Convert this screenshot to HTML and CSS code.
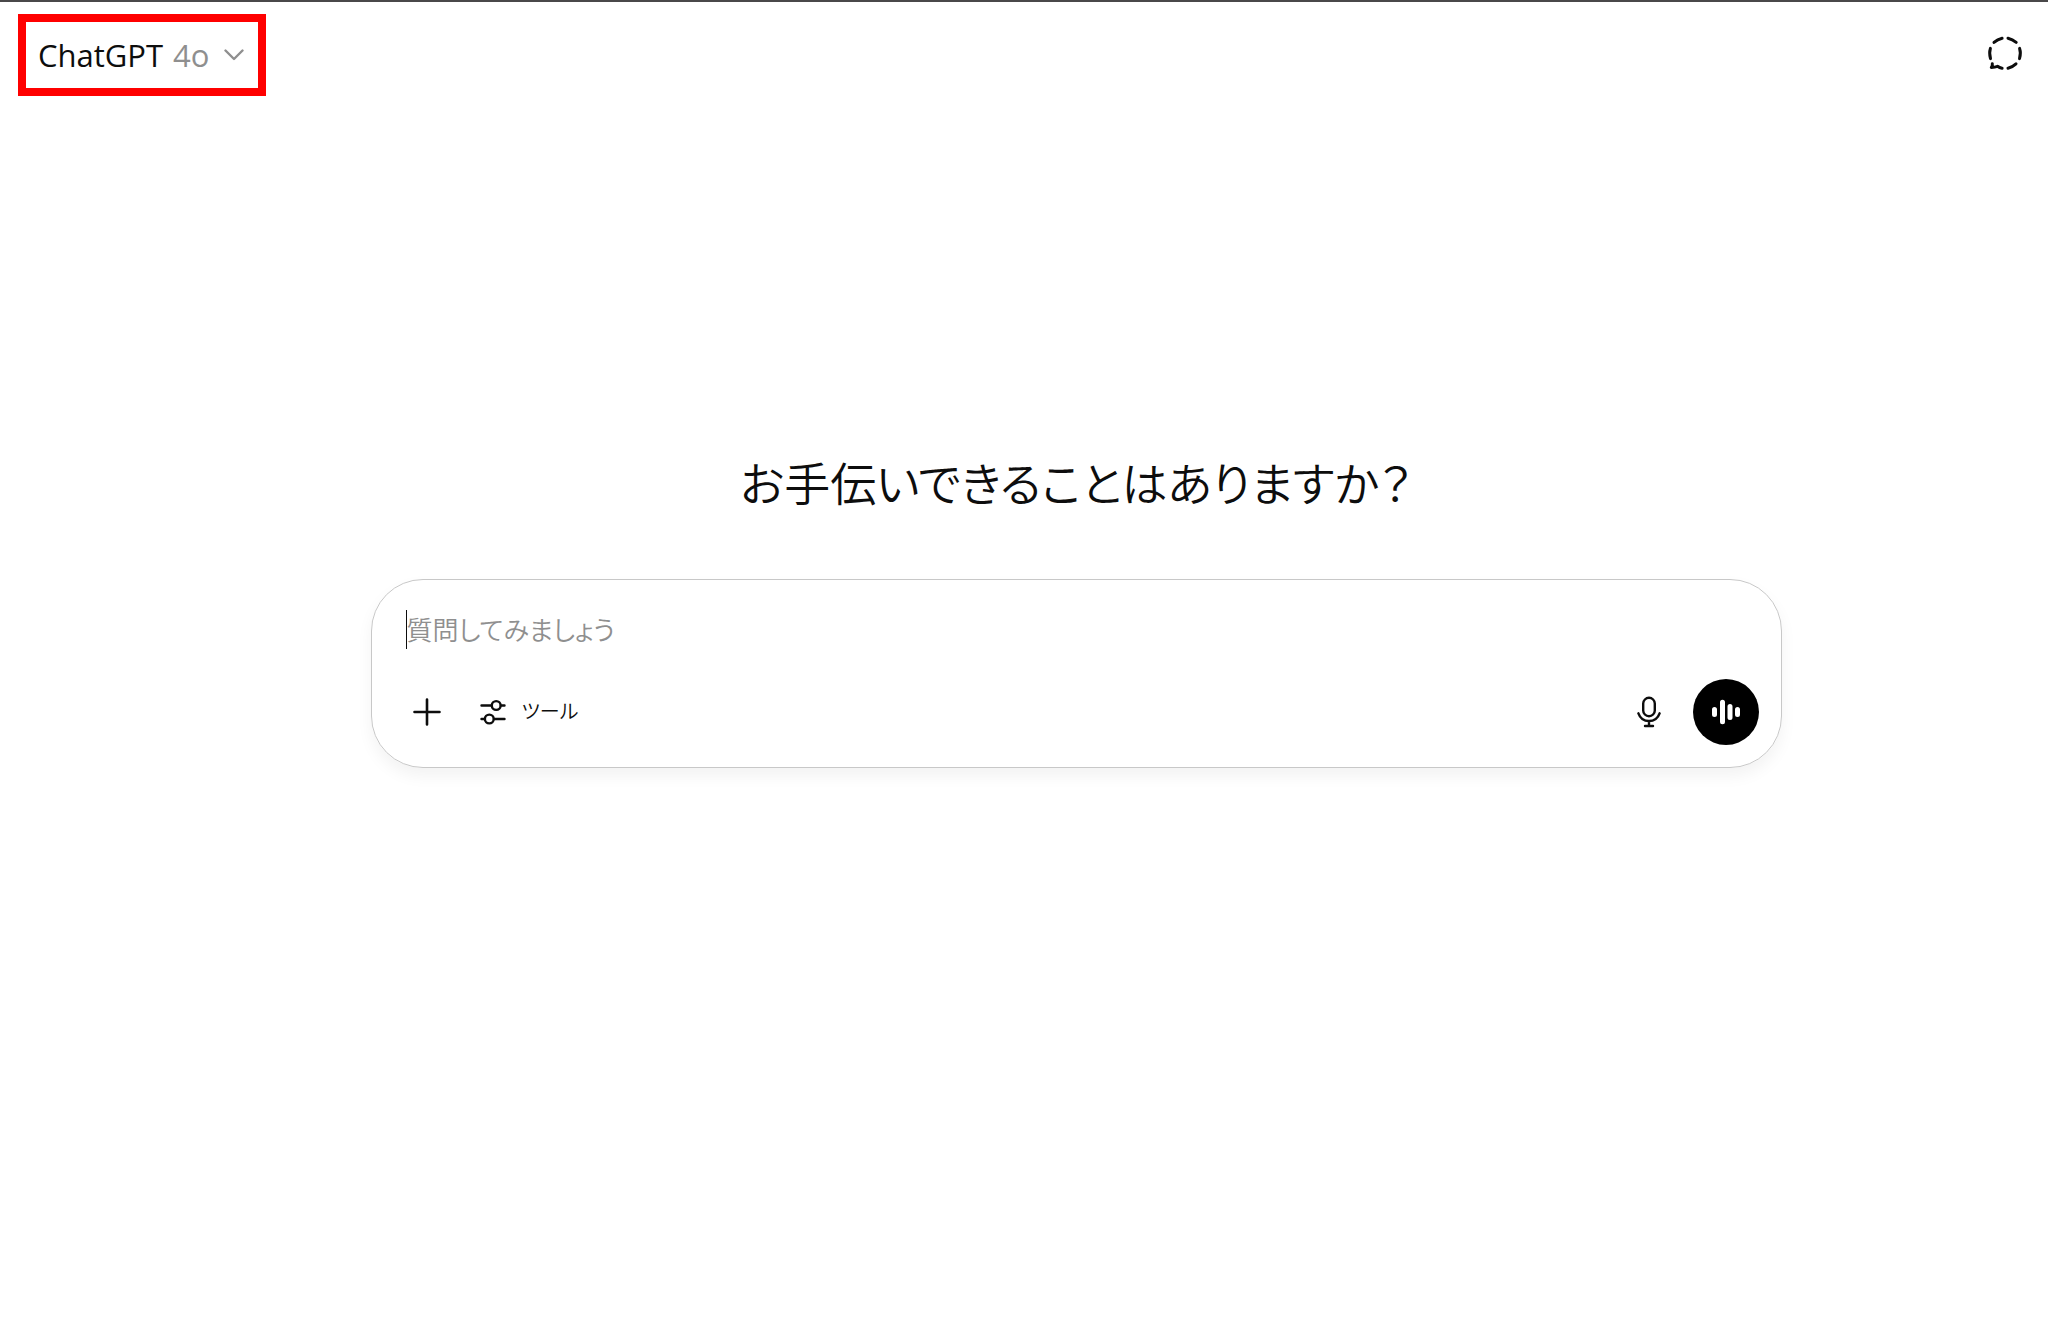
FILE: index.html
```html
<!DOCTYPE html>
<html lang="ja">
<head>
  <meta charset="UTF-8">
  <meta name="viewport" content="width=device-width, initial-scale=1.0">
  <title>ChatGPT</title>
  <link rel="stylesheet" href="styles.css">
</head>
<body>
  <header class="top-bar">
    <button type="button" class="model-button">
      <span>ChatGPT</span>
      <span class="model-name">4o</span>
      <svg class="chevron" width="20" height="12" viewBox="0 0 20 12" fill="none" stroke="currentColor" stroke-width="2.4" stroke-linecap="round" stroke-linejoin="round"><path d="M1.5 1.5l8.5 8.5 8.5-8.5"/></svg>
    </button>
    <button type="button" class="icon-button" aria-label="一時チャット">
      <svg width="36" height="36" viewBox="0 0 36 36" fill="none" stroke="currentColor" stroke-width="3" stroke-linecap="round" stroke-linejoin="round">
        <path d="M15.1 3.2Q10.5 4.2 7 7.4M21 3.2Q25.5 4.3 29.2 7.4M3.4 13.4Q1.9 18 3.5 23.6M32.6 13.4Q34.2 18 32.5 23.6M29 28.9Q25.5 32.2 21 33.2M15.1 33.2Q12.5 32.8 10.5 31.3Q8 32.3 4.3 32.5Q5.7 30.8 5.3 28.7"/>
      </svg>
    </button>
  </header>

  <main class="chat">
    <h1>お手伝いできることはありますか？</h1>
    <form class="prompt-box">
      <div class="prompt-line">
        <input type="text" id="prompt" aria-label="質問" placeholder="質問してみましょう">
      </div>
      <div class="actions">
        <button type="button" class="icon-button" aria-label="追加">
          <svg width="28" height="28" viewBox="0 0 28 28" fill="none" stroke="currentColor" stroke-width="2.6" stroke-linecap="round"><path d="M14 1.5v25M1.5 14h25"/></svg>
        </button>
        <button type="button" class="tool-button">
          <svg width="26" height="26" viewBox="0 0 26 26" fill="none" stroke="currentColor" stroke-width="2.4" stroke-linecap="round">
            <path d="M1.5 6.5h10M21 6.5h3.5M1.5 20h3M14 20h10.5"/>
            <circle cx="16.2" cy="6.5" r="4.4"/>
            <circle cx="9.3" cy="20" r="4.4"/>
          </svg>
          <span>ツール</span>
        </button>
        <button type="button" class="icon-button mic-button" aria-label="音声入力">
          <svg width="24" height="32" viewBox="0 0 24 32" fill="none" stroke="currentColor" stroke-width="2.4" stroke-linecap="round">
            <rect x="6.2" y="1.8" width="11.6" height="18.4" rx="5.8"/>
            <path d="M1.4 17.3C3 21.8 7 25 12 25s9-3.2 10.6-7.7M12 25v5M8 30h8"/>
          </svg>
        </button>
        <button type="button" class="voice-button" aria-label="音声モード">
          <svg width="30" height="28" viewBox="0 0 30 28" fill="none" stroke="currentColor" stroke-width="5" stroke-linecap="round"><path d="M3.5 11.5v5M11.5 4.3v19.4M19 8.5v11M26.5 11.5v5"/></svg>
        </button>
      </div>
    </form>
  </main>
</body>
</html>
```
FILE: styles.css
```css
* {
  box-sizing: border-box;
}
body {
  margin: 0;
  min-height: 100vh;
  display: flex;
  flex-direction: column;
  border-top: 2px solid #4a484a;
  background: #fff;
  color: #0d0d0d;
  font-family: "Open Sans", "Noto Sans CJK JP", sans-serif;
  font-feature-settings: "palt";
}
button,
input {
  border: 0;
  padding: 0;
  background: none;
  color: inherit;
  font: inherit;
  font-feature-settings: inherit;
}
button {
  cursor: pointer;
}
svg {
  display: block;
}
.top-bar {
  display: flex;
  align-items: flex-start;
  justify-content: space-between;
  padding: 12px 18px 0;
}
.top-bar .icon-button {
  height: 78px;
}
.model-button {
  display: flex;
  align-items: center;
  gap: 10px;
  height: 82px;
  padding: 0 14px 0 12px;
  border: 8px solid #f00;
  font-size: 31px;
  line-height: 40px;
}
.model-name,
.chevron {
  color: #8f8f8f;
}
.chevron {
  margin-left: 5px;
}
.icon-button {
  display: flex;
  align-items: center;
  justify-content: center;
  width: 50px;
  height: 50px;
  border-radius: 50%;
}
.chat {
  flex: 1;
  display: flex;
  flex-direction: column;
  align-items: center;
  justify-content: center;
  padding: 0 0 212px 104px;
}
h1 {
  margin: 0 0 66px;
  font-family: "Noto Sans CJK JP", sans-serif;
  font-size: 46px;
  font-weight: 350;
  line-height: 64px;
}
.prompt-box {
  width: 100%;
  max-width: 1411px;
  padding: 30px 22px 22px 30px;
  border: 1px solid #c8c8c8;
  border-radius: 52px;
  box-shadow: 0 8px 16px rgba(0, 0, 0, 0.05);
}
.prompt-line {
  display: flex;
  margin: 0 4px 30px;
  border-left: 1px solid #0d0d0d;
}
.prompt-line input {
  flex: 1;
  height: 39px;
  outline: 0;
  font-size: 26px;
  font-weight: 350;
}
.prompt-line input::placeholder {
  color: #8f8f8f;
  opacity: 1;
}
.actions {
  display: flex;
  align-items: center;
}
.tool-button {
  display: flex;
  align-items: center;
  gap: 16px;
  margin-left: 28px;
  font-size: 20px;
  font-weight: 350;
  line-height: 36px;
}
.mic-button {
  margin-left: auto;
}
.voice-button {
  display: flex;
  align-items: center;
  justify-content: center;
  width: 66px;
  height: 66px;
  margin-left: 19px;
  border-radius: 50%;
  background: #000;
  color: #fff;
}
```
